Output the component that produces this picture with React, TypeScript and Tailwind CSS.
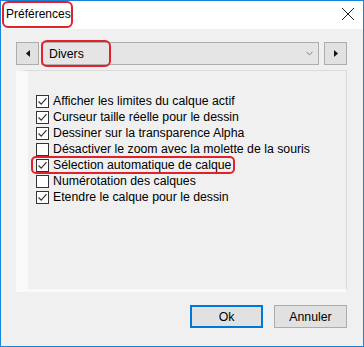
import { ChevronDown } from "lucide-react"

const options = [
  { label: "Afficher les limites du calque actif", checked: true },
  { label: "Curseur taille réelle pour le dessin", checked: true },
  { label: "Dessiner sur la transparence Alpha", checked: true },
  { label: "Désactiver le zoom avec la molette de la souris", checked: false },
  { label: "Sélection automatique de calque", checked: true, marked: true },
  { label: "Numérotation des calques", checked: false },
  { label: "Etendre le calque pour le dessin", checked: true },
]

function CheckBox({ checked }: { checked: boolean }) {
  return (
    <span className="w-[13px] h-[13px] border border-[#333] bg-white flex items-center justify-center shrink-0">
      {checked && (
        <svg width="11" height="11" viewBox="0 0 11 11">
          <path d="M1.5 5.5 L4.2 8.2 L9.5 2.2" fill="none" stroke="#333" strokeWidth="1.2" />
        </svg>
      )}
    </span>
  )
}

function Arrow({ dir }: { dir: "left" | "right" }) {
  return (
    <button className="w-[23px] h-[23px] bg-[#e1e1e1] border border-[#adadad] flex items-center justify-center">
      <svg width="4" height="7" viewBox="0 0 4 7">
        {dir === "left" ? <path d="M4 0 L0 3.5 L4 7 Z" fill="#111" /> : <path d="M0 0 L4 3.5 L0 7 Z" fill="#111" />}
      </svg>
    </button>
  )
}

export default function App() {
  return (
    <div
      className="w-[364px] h-[347px] border border-[#1883d7] bg-[#f0f0f0] flex flex-col text-[12.3px] leading-[16px] text-black"
      style={{ fontFamily: '"Liberation Sans", Arial, sans-serif' }}
    >
      <div className="h-[28px] bg-white flex items-center justify-between shrink-0">
        <span className="ml-[1px] mt-[-2px] border-2 border-[#e3212b] rounded-[6px] h-[27px] w-[71px] pl-[2px] flex items-center text-[12px]">
          Préférences
        </span>
        <svg width="14" height="14" viewBox="0 0 14 14" className="mr-[8px] mt-[-2px]">
          <path d="M1 1 L13 13 M13 1 L1 13" stroke="#222" strokeWidth="1" />
        </svg>
      </div>

      <div className="flex-1 flex flex-col pl-[15px] pr-[16px] pt-[13px]">
        <div className="flex items-center h-[23px]">
          <Arrow dir="left" />
          <div className="ml-[2px] flex-1 h-[23px] bg-[#e5e5e5] border border-[#adadad] flex items-center justify-between relative">
            <span className="absolute left-[-1px] top-[-3px] w-[70px] h-[27px] border-2 border-[#e3212b] rounded-[6px]" />
            <span className="pl-[7px]">Divers</span>
            <ChevronDown size={11} strokeWidth={1.5} className="mr-[3px] text-[#555]" />
          </div>
          <div className="w-[5px]" />
          <Arrow dir="right" />
        </div>

        <div className="mt-[5px] h-[222px] border border-[#dadada] border-l-[12px] border-l-[#f9f9f9] border-b-[3px] border-b-[#fafafa] bg-[#f0f0f0] pt-[22px] pl-[8px]">
          <div className="flex flex-col">
            {options.map((o) => (
              <div key={o.label} className="relative h-[16px] flex items-center gap-[4px]">
                {o.marked && (
                  <span className="absolute left-[-5px] top-[-1px] w-[204px] h-[18px] border-2 border-[#e3212b] rounded-[5px]" />
                )}
                <CheckBox checked={o.checked} />
                <span className="whitespace-nowrap">{o.label}</span>
              </div>
            ))}
          </div>
        </div>

        <div className="flex justify-end gap-[11px] mt-[13px]">
          <button className="w-[73px] h-[23px] bg-[#e1e1e1] border-2 border-[#0078d7]">Ok</button>
          <button className="w-[73px] h-[23px] bg-[#e1e1e1] border border-[#adadad]">Annuler</button>
        </div>
      </div>
    </div>
  )
}
